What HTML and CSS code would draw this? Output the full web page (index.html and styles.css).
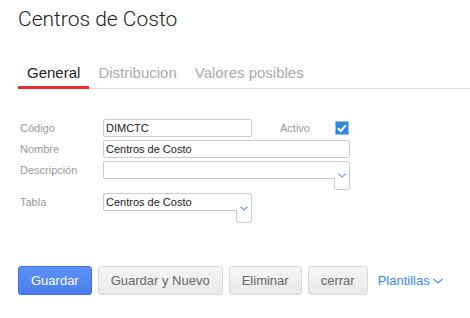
FILE: index.html
```html
<!DOCTYPE html>
<html lang="es">
<head>
  <meta charset="UTF-8">
  <meta name="viewport" content="width=device-width, initial-scale=1.0">
  <title>Centros de Costo</title>
  <link rel="stylesheet" href="styles.css">
</head>

<body>
  <div class="page">
    <h1>Centros de Costo</h1>

    <nav class="tabs">
      <a class="tab active" href="#!">General</a>
      <a class="tab" href="#!">Distribucion</a>
      <a class="tab" href="#!">Valores posibles</a>
    </nav>

    <form class="form" onsubmit="event.preventDefault()">
      <div class="row">
        <label class="label" for="codigo">Código</label>
        <input class="field short" type="text" id="codigo" value="DIMCTC">
        <span class="label-inline">Activo</span>
        <span class="check">
          <svg width="12" height="12" viewBox="0 0 12 12">
            <polyline points="2,6.2 4.8,9 10,3.2" fill="none" stroke="#fff" stroke-width="2" />
          </svg>
        </span>
      </div>

      <div class="row">
        <label class="label" for="nombre">Nombre</label>
        <input class="field long" type="text" id="nombre" value="Centros de Costo">
      </div>

      <div class="row">
        <label class="label" for="descripcion">Descripción</label>
        <div class="combo long">
          <input class="field" type="text" id="descripcion" value="">
          <button class="drop" type="button">
            <svg width="8" height="5" viewBox="0 0 8 5">
              <polyline points="0.5,0.8 4,4 7.5,0.8" fill="none" stroke="#6e9de6" stroke-width="1.2" />
            </svg>
          </button>
        </div>
      </div>

      <div class="row">
        <label class="label" for="tabla">Tabla</label>
        <div class="combo short tall">
          <input class="field" type="text" id="tabla" value="Centros de Costo">
          <button class="drop" type="button">
            <svg width="8" height="5" viewBox="0 0 8 5">
              <polyline points="0.5,0.8 4,4 7.5,0.8" fill="none" stroke="#6e9de6" stroke-width="1.2" />
            </svg>
          </button>
        </div>
      </div>
    </form>

    <div class="actions">
      <button class="btn primary" type="button">Guardar</button>
      <button class="btn" type="button">Guardar y Nuevo</button>
      <button class="btn" type="button">Eliminar</button>
      <button class="btn" type="button">cerrar</button>
      <a class="menu" href="#!">
        Plantillas
        <svg width="10" height="6" viewBox="0 0 10 6">
          <polyline points="0.5,0.8 5,5 9.5,0.8" fill="none" stroke="#3d84f0" stroke-width="1.1" />
        </svg>
      </a>
    </div>
  </div>
</body>
</html>
```

FILE: styles.css
```css
* {
  margin: 0;
  padding: 0;
  box-sizing: border-box;
  font-family: 'Liberation Sans', Arial, sans-serif;
}

body {
  background: #fff;
  color: #222;
}

.page {
  padding: 7px 0 0 18px;
}

h1 {
  font-family: Roboto, sans-serif;
  font-weight: 300;
  font-size: 21px;
  line-height: 25px;
  color: #222;
}

/* tabs */
.tabs {
  display: flex;
  margin-top: 32px;
  border-bottom: 1px solid #ddd;
}

.tab {
  padding: 0 9px 4px;
  font-size: 15px;
  line-height: 18px;
  color: #aaa;
  text-decoration: none;
  border-bottom: 3px solid transparent;
  margin-bottom: -1px;
}

.tab.active {
  color: #222;
  border-bottom-color: #ee2b2b;
}

/* form */
.form {
  display: flex;
  flex-direction: column;
  gap: 3px;
  margin-top: 30px;
  padding-left: 2px;
}

.row {
  display: flex;
  align-items: flex-start;
}

.label {
  width: 83px;
  font-size: 11px;
  line-height: 18px;
  color: #999;
}

.label-inline {
  width: 55px;
  margin-left: 28px;
  font-size: 11px;
  line-height: 18px;
  color: #999;
}

.field {
  height: 18px;
  padding: 0 2px;
  border: 1px solid #ccc;
  border-radius: 2px;
  font-size: 11px;
  color: #222;
  background: #fff;
  outline: none;
}

.short {
  width: 149px;
}

.long {
  width: 247px;
}

.check {
  display: flex;
  align-items: center;
  justify-content: center;
  width: 14px;
  height: 14px;
  margin-top: 2px;
  background: #2a8ae2;
  border: 1px solid #9dc1ea;
}

.combo {
  display: flex;
  align-items: flex-start;
}

.combo .field {
  flex: 1;
  min-width: 0;
  position: relative;
  z-index: 1;
  margin-right: -1px;
  border-right: none;
  border-radius: 2px 0 0 2px;
}

.drop {
  display: flex;
  align-items: center;
  justify-content: center;
  width: 16px;
  height: 29px;
  border: 1px solid #ccc;
  border-radius: 0 3px 3px 3px;
  background: #fff;
}

.tall .drop {
  height: 30px;
}

/* buttons */
.actions {
  display: flex;
  align-items: center;
  gap: 6px;
  margin-top: 43px;
}

.btn {
  height: 29px;
  padding: 0 12px;
  border: 1px solid #d9d9d9;
  border-radius: 3px;
  background: linear-gradient(#f6f6f6, #e9e9e9);
  font-size: 13px;
  color: #666;
  cursor: pointer;
}

.btn.primary {
  border-color: #4273e6;
  background: linear-gradient(#5b92f6, #4a7eee);
  color: #fff;
}

.menu {
  display: flex;
  align-items: center;
  gap: 3px;
  margin-left: 4px;
  font-size: 13px;
  color: #3d84f0;
  text-decoration: none;
}
```
